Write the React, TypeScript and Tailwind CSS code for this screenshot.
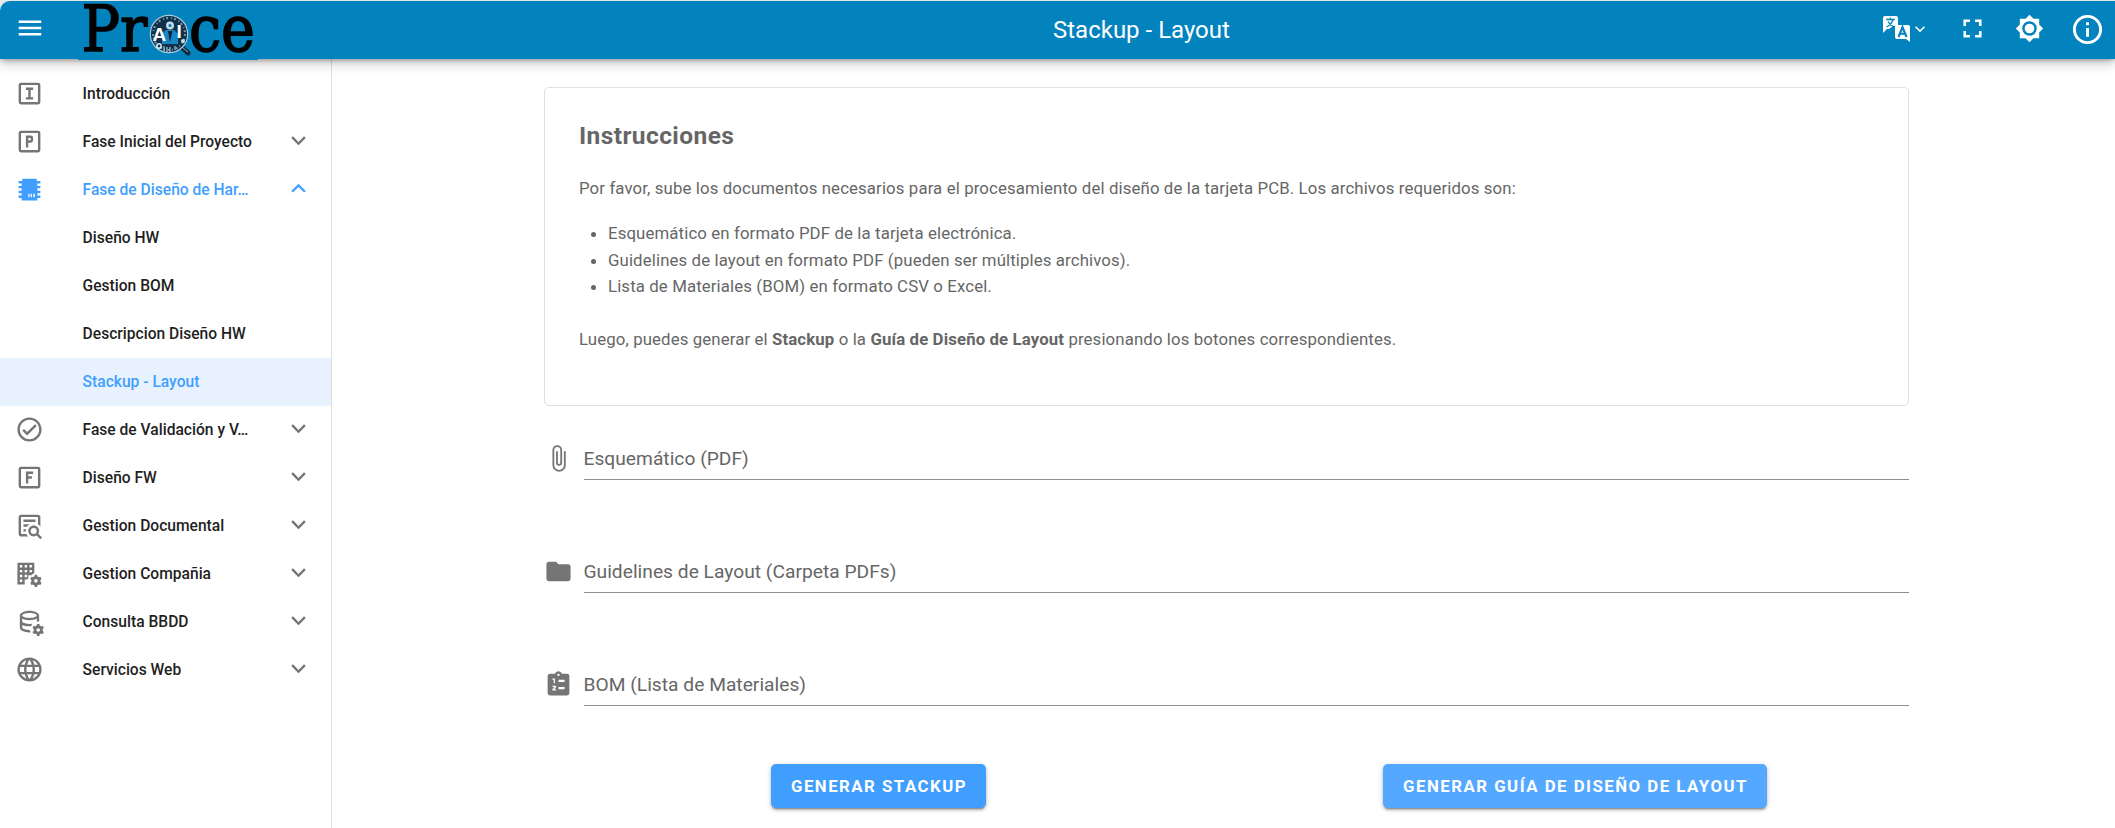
import type { ReactNode } from 'react';

const box = 'M3,5A2,2 0 0,1 5,3H19A2,2 0 0,1 21,5V19A2,2 0 0,1 19,21H5A2,2 0 0,1 3,19V5M5,5V19H19V5H5Z';
const cog =
  'M22.6,17.8L23.6,18.6L22.6,20.4L21.4,19.9A3.6,3.6 0 0,1 20.1,20.6L19.9,22H17.9L17.7,20.6A3.6,3.6 0 0,1 16.4,19.9L15.2,20.4L14.2,18.6L15.2,17.8A4,4 0 0,1 15.2,16.2L14.2,15.4L15.2,13.6L16.4,14.1A3.6,3.6 0 0,1 17.7,13.4L17.9,12H19.9L20.1,13.4A3.6,3.6 0 0,1 21.4,14.1L22.6,13.6L23.6,15.4L22.6,16.2A4,4 0 0,1 22.6,17.8M18.9,15.5A1.5,1.5 0 1,0 18.9,18.5A1.5,1.5 0 1,0 18.9,15.5Z';

const paths = {
  menu: 'M3,6H21V8H3V6M3,11H21V13H3V11M3,16H21V18H3V16Z',
  down: 'M7.41,8.58L12,13.17L16.59,8.58L18,10L12,16L6,10L7.41,8.58Z',
  up: 'M7.41,15.41L12,10.83L16.59,15.41L18,14L12,8L6,14L7.41,15.41Z',
  fullscreen: 'M5,5H10V7H7V10H5V5M14,5H19V10H17V7H14V5M17,14H19V19H14V17H17V14M10,17V19H5V14H7V17H10Z',
  brightness:
    'M12,8A4,4 0 0,0 8,12A4,4 0 0,0 12,16A4,4 0 0,0 16,12A4,4 0 0,0 12,8M12,18A6,6 0 0,1 6,12A6,6 0 0,1 12,6A6,6 0 0,1 18,12A6,6 0 0,1 12,18M20,8.69V4H15.31L12,0.69L8.69,4H4V8.69L0.69,12L4,15.31V20H8.69L12,23.31L15.31,20H20V15.31L23.31,12L20,8.69Z',
  info: 'M11,9H13V7H11M12,20C7.59,20 4,16.41 4,12C4,7.59 7.59,4 12,4C16.41,4 20,7.59 20,12C20,16.41 16.41,20 12,20M12,2A10,10 0 0,0 2,12A10,10 0 0,0 12,22A10,10 0 0,0 22,12A10,10 0 0,0 12,2M11,17H13V11H11V17Z',
  boxI: box + 'M9,7V9H11V15H9V17H15V15H13V9H15V7H9Z',
  boxP: box + 'M9,7V17H11V13H13A2,2 0 0,0 15,11V9A2,2 0 0,0 13,7H9M11,9H13V11H11V9Z',
  boxF: box + 'M9,7H15V9H11V11H14V13H11V17H9V7Z',
  chip: 'M6,3H18V5H21V7H18.5V9H21V11H18.5V13H21V15H18.5V17H21V19H18.5V21H5.5V19H3V17H5.5V15H3V13H5.5V11H3V9H5.5V7H3V5H6V3M11,15.5V18.5H12V15.5H11M13,15.5V18.5H14V15.5H13M15.2,15.5V18.5H16.4V15.5H15.2Z',
  check:
    'M12 2C6.5 2 2 6.5 2 12S6.5 22 12 22 22 17.5 22 12 17.5 2 12 2M12 20C7.59 20 4 16.41 4 12S7.59 4 12 4 20 7.59 20 12 16.41 20 12 20M16.59 7.58L10 14.17L7.41 11.59L6 13L10 17L18 9L16.59 7.58Z',
  docSearch:
    'M15.5,12C18,12 20,14 20,16.5C20,17.38 19.75,18.21 19.31,18.9L22.39,22L21,23.39L17.88,20.32C17.19,20.75 16.37,21 15.5,21C13,21 11,19 11,16.5C11,14 13,12 15.5,12M15.5,14A2.5,2.5 0 0,0 13,16.5A2.5,2.5 0 0,0 15.5,19A2.5,2.5 0 0,0 18,16.5A2.5,2.5 0 0,0 15.5,14M5,3H19C20.11,3 21,3.89 21,5V13.03C20.5,12.23 19.81,11.54 19,11V5H5V19H9.5C9.81,19.75 10.26,20.42 10.81,21H5C3.89,21 3,20.11 3,19V5C3,3.89 3.89,3 5,3M7,7H17V9H7V7M7,11H12.03C11.23,11.5 10.54,12.19 10,13H7V11M7,15H9.17C9.06,15.5 9,16 9,16.5V17H7V15Z',
  building:
    'M2,3H16V11.5L13.5,13.5H11V16L10,17H8V21H2V3M4,5V7H6V5H4M8,5V7H10V5H8M12,5V7H14V5H12M4,9V11H6V9H4M8,9V11H10V9H8M12,9V11H14V9H12M4,13V15H6V13H4M8,13V15H10V13H8M4,17V19H6V17H4Z',
  web: 'M16.36,14C16.44,13.34 16.5,12.68 16.5,12C16.5,11.32 16.44,10.66 16.36,10H19.74C19.9,10.64 20,11.31 20,12C20,12.69 19.9,13.36 19.74,14M14.59,19.56C15.19,18.45 15.65,17.25 15.97,16H18.92C17.96,17.65 16.43,18.93 14.59,19.56M14.34,14H9.66C9.56,13.34 9.5,12.68 9.5,12C9.5,11.32 9.56,10.65 9.66,10H14.34C14.43,10.65 14.5,11.32 14.5,12C14.5,12.68 14.43,13.34 14.34,14M12,19.96C11.17,18.76 10.5,17.43 10.09,16H13.91C13.5,17.43 12.83,18.76 12,19.96M8,8H5.08C6.03,6.34 7.57,5.06 9.4,4.44C8.8,5.55 8.35,6.75 8,8M5.08,16H8C8.35,17.25 8.8,18.45 9.4,19.56C7.57,18.93 6.03,17.65 5.08,16M4.26,14C4.1,13.36 4,12.69 4,12C4,11.31 4.1,10.64 4.26,10H7.64C7.56,10.66 7.5,11.32 7.5,12C7.5,12.68 7.56,13.34 7.64,14M12,4.03C12.83,5.23 13.5,6.57 13.91,8H10.09C10.5,6.57 11.17,5.23 12,4.03M18.92,8H15.97C15.65,6.75 15.19,5.55 14.59,4.44C16.43,5.07 17.96,6.34 18.92,8M12,2C6.47,2 2,6.5 2,12A10,10 0 0,0 12,22A10,10 0 0,0 22,12A10,10 0 0,0 12,2Z',
  database:
    'M12,3C16.4,3 20,4.8 20,7V12H18V9.6C16.6,10.5 14.4,11 12,11C9.6,11 7.4,10.5 6,9.6V12.5C7.1,13.4 9.3,14 12,14L14.2,13.9L13.3,15.9L12,16C9.7,16 7.6,15.6 6,14.8V17C6,17.9 8.3,19 12,19L13.1,20.9L12,21C7.6,21 4,19.2 4,17V7C4,4.8 7.6,3 12,3M12,5C8.3,5 6,6.2 6,7C6,7.8 8.3,9 12,9C15.7,9 18,7.8 18,7C18,6.2 15.7,5 12,5Z',
  paperclip:
    'M16.5,6V17.5A4,4 0 0,1 12.5,21.5A4,4 0 0,1 8.5,17.5V5A2.5,2.5 0 0,1 11,2.5A2.5,2.5 0 0,1 13.5,5V15.5A1,1 0 0,1 12.5,16.5A1,1 0 0,1 11.5,15.5V6H10V15.5A2.5,2.5 0 0,0 12.5,18A2.5,2.5 0 0,0 15,15.5V5A4,4 0 0,0 11,1A4,4 0 0,0 7,5V17.5A5.5,5.5 0 0,0 12.5,23A5.5,5.5 0 0,0 18,17.5V6H16.5Z',
  folder: 'M10,4H4C2.89,4 2,4.89 2,6V18A2,2 0 0,0 4,20H20A2,2 0 0,0 22,18V8C22,6.89 21.1,6 20,6H12L10,4Z',
  clipboard:
    'M19,3H14.82C14.4,1.84 13.3,1 12,1C10.7,1 9.6,1.84 9.18,3H5A2,2 0 0,0 3,5V19A2,2 0 0,0 5,21H19A2,2 0 0,0 21,19V5A2,2 0 0,0 19,3M12,3A1,1 0 1,1 12,5A1,1 0 1,1 12,3M7,7H9V11H8V8H7V7M12,8H17V10H12V8M7,13H10V14.2L8.3,16H10V17H7V15.8L8.7,14H7V13M12,14H17V16H12V14Z',
};

type IconName = keyof typeof paths;

function Icon({ name, className = 'size-[29px]' }: { name: IconName; className?: string }) {
  return (
    <svg viewBox="0 0 24 24" className={`shrink-0 overflow-visible ${className}`} fill="currentColor" fillRule="evenodd">
      <path d={paths[name]} />
      {name === 'building' && <path d={cog} transform="translate(-1.6 1.1)" />}
      {name === 'database' && <path d={cog} transform="translate(0.3 2)" />}
    </svg>
  );
}

type Item = { label: string; icon?: IconName; arrow?: 'down' | 'up'; active?: boolean; selected?: boolean };

const items: Item[] = [
  { label: 'Introducción', icon: 'boxI' },
  { label: 'Fase Inicial del Proyecto', icon: 'boxP', arrow: 'down' },
  { label: 'Fase de Diseño de Har…', icon: 'chip', arrow: 'up', active: true },
  { label: 'Diseño HW' },
  { label: 'Gestion BOM' },
  { label: 'Descripcion Diseño HW' },
  { label: 'Stackup - Layout', active: true, selected: true },
  { label: 'Fase de Validación y V…', icon: 'check', arrow: 'down' },
  { label: 'Diseño FW', icon: 'boxF', arrow: 'down' },
  { label: 'Gestion Documental', icon: 'docSearch', arrow: 'down' },
  { label: 'Gestion Compañia', icon: 'building', arrow: 'down' },
  { label: 'Consulta BBDD', icon: 'database', arrow: 'down' },
  { label: 'Servicios Web', icon: 'web', arrow: 'down' },
];

function NavItem({ label, icon, arrow, active, selected }: Item) {
  return (
    <li className={`flex h-12 items-center pr-[18px] pl-[15px] ${selected ? 'bg-[#e8f2ff]' : ''} ${active ? 'text-[#409eff]' : 'text-[#1f1f1f]'}`}>
      <span className={`flex w-[67.6px] shrink-0 ${active ? '' : 'text-[#757575]'}`}>{icon && <Icon name={icon} />}</span>
      <span className="text-[15.6px] leading-6 font-medium whitespace-nowrap">{label}</span>
      {arrow && (
        <span className={`ml-auto ${active ? '' : 'text-[#757575]'}`}>
          <Icon name={arrow} className="mb-0.5 size-[29px]" />
        </span>
      )}
    </li>
  );
}

function Logo() {
  return (
    <svg viewBox="0 0 180 59" className="ml-[33px] h-[59px] w-[180px] shrink-0 overflow-visible">
      <rect width="180" height="59" fill="#0283bd" />
      <g fontFamily="'DejaVu Serif', serif" fontSize="63" fill="#000" stroke="#000" strokeWidth="1.6">
        <text x="3.5" y="50" textLength="66" lengthAdjust="spacingAndGlyphs">Pr</text>
        <text x="111" y="50" textLength="66" lengthAdjust="spacingAndGlyphs">ce</text>
      </g>
      <path d="M103 45.5L110 52" stroke="#10293f" strokeWidth="5" strokeLinecap="round" />
      <path d="M104 46L110 51" stroke="#7fb4d2" strokeWidth="1" />
      <circle cx="91" cy="33" r="18.7" fill="#12304a" stroke="#a9cbdc" strokeWidth="1.2" />
      <circle cx="91" cy="33" r="16" fill="none" stroke="#6f9cb4" strokeWidth="2" strokeDasharray="2 3 1 2" />
      <path d="M84 43V32L88 29H96L100 33V43Z" fill="#1587c4" />
      <path d="M90 30L92 41L94.5 30Z" fill="#0c2438" />
      <circle cx="92" cy="24.5" r="4" fill="#b9ddec" />
      <circle cx="92" cy="24.5" r="1.5" fill="#276c94" />
      <path d="M86 45V51M89 46V51M92 46V51M97 45V49" fill="none" stroke="#9fc5d8" strokeWidth="1.2" />
      <circle cx="81" cy="45" r="2.2" fill="none" stroke="#d9edf6" strokeWidth="1.5" />
      <circle cx="105" cy="40" r="2" fill="#c1dfec" />
      <g fontFamily="'Liberation Sans', sans-serif" fontWeight="700" fontSize="19" fill="#fff">
        <text x="74.5" y="40">A</text>
        <text x="98.5" y="36.5">I</text>
      </g>
    </svg>
  );
}

function TranslateIcon() {
  return (
    <svg viewBox="0 0 28 28" className="size-7 shrink-0">
      <path d="M2 1H13Q15 1 15 3V11H10L6 14H4L0 18V3Q0 1 2 1Z" fill="#fff" />
      <path d="M3.2 4.5H11.8M7.5 2.5V4.5M10 5Q8 10 3.5 12M5 6.5Q7 10.5 11 12" fill="none" stroke="#0283bd" strokeWidth="1.3" />
      <path d="M14 10H25Q27 10 27 12V27L23 24H14Q12 24 12 22V12Q12 10 14 10Z" fill="#fff" />
      <path d="M15.5 22L19.5 12L23.5 22M16.5 18.7H22.5" fill="none" stroke="#0283bd" strokeWidth="2.1" />
    </svg>
  );
}

function Field({ icon, label }: { icon: IconName; label: string }) {
  return (
    <div className="flex h-[113px] items-start">
      <Icon name={icon} className="mt-[14px] mr-[10.5px] size-[29px] text-[#757575]" />
      <div className="flex h-[50px] flex-1 items-center border-b border-[#8f8f8f] pt-[9px] text-[19.2px] leading-6 tracking-[0.02px] text-[#666]">
        {label}
      </div>
    </div>
  );
}

function Button({ className, children }: { className: string; children: ReactNode }) {
  return (
    <button
      className={`flex h-11 items-center justify-center rounded-[5px] pt-px pl-px text-[16.8px] font-bold tracking-[1.5px] text-white shadow-[0_3px_2px_-2px_rgba(0,0,0,0.3),0_2px_3px_rgba(0,0,0,0.2),0_1px_6px_rgba(0,0,0,0.14)] ${className}`}
    >
      {children}
    </button>
  );
}

export default function App() {
  return (
    <div className="flex h-[828px] w-[2115px] flex-col overflow-hidden bg-white font-[Roboto,sans-serif]">
      <div className="z-10 h-[59px] shrink-0 bg-[#e4e9ea] pt-px shadow-[0_2px_5px_-1px_rgba(0,0,0,0.3),0_4px_12px_rgba(0,0,0,0.22)]">
        <header className="flex h-[58px] rounded-tl-[10px] bg-[#0283bd] pl-[15px] text-white">
          <Icon name="menu" className="mt-[12px] size-[30px]" />
          <Logo />
          <h1 className="ml-[795px] w-[190px] pt-[13px] text-[24px] leading-8 font-normal whitespace-nowrap">Stackup - Layout</h1>
          <div className="ml-auto flex items-start pr-[10px]">
            <span className="mt-[14px] flex items-center">
              <TranslateIcon />
              <Icon name="down" className="-ml-px size-[20px]" />
            </span>
            <Icon name="fullscreen" className="mt-[12px] ml-[27px] size-[31px]" />
            <Icon name="brightness" className="mt-[13px] ml-[27px] size-[29px]" />
            <Icon name="info" className="mt-[11px] ml-[26px] size-[35px]" />
          </div>
        </header>
      </div>
      <div className="flex flex-1">
        <nav className="w-[332px] shrink-0 border-r border-[#dedede] pt-[10.6px]">
          <ul>
            {items.map((item) => (
              <NavItem key={item.label} {...item} />
            ))}
          </ul>
        </nav>
        <main className="flex-1 pt-[28px] pl-[212px]">
          <div className="w-[1365px]">
            <section className="h-[319px] rounded-[5px] border border-[#dfdfdf] px-[34px] pt-[30px] text-[16.8px] leading-[26.4px] tracking-[0.12px] text-[#666]">
              <h2 className="text-[24.5px] leading-9 font-bold tracking-[0.42px]">Instrucciones</h2>
              <p className="mt-[21px]">
                Por favor, sube los documentos necesarios para el procesamiento del diseño de la tarjeta PCB. Los archivos requeridos son:
              </p>
              <ul className="mt-[19px] list-disc pl-[29px]">
                <li>Esquemático en formato PDF de la tarjeta electrónica.</li>
                <li>Guidelines de layout en formato PDF (pueden ser múltiples archivos).</li>
                <li>Lista de Materiales (BOM) en formato CSV o Excel.</li>
              </ul>
              <p className="mt-[26px]">
                Luego, puedes generar el <b>Stackup</b> o la <b>Guía de Diseño de Layout</b> presionando los botones correspondientes.
              </p>
            </section>
            <div className="mt-[24px]">
              <Field icon="paperclip" label="Esquemático (PDF)" />
              <Field icon="folder" label="Guidelines de Layout (Carpeta PDFs)" />
              <Field icon="clipboard" label="BOM (Lista de Materiales)" />
            </div>
            <div className="-mt-[5px] flex">
              <Button className="ml-[227px] w-[215px] bg-[#409eff]">GENERAR STACKUP</Button>
              <Button className="ml-[397px] w-[384px] bg-[#55a8ff]">GENERAR GUÍA DE DISEÑO DE LAYOUT</Button>
            </div>
          </div>
        </main>
      </div>
    </div>
  );
}
